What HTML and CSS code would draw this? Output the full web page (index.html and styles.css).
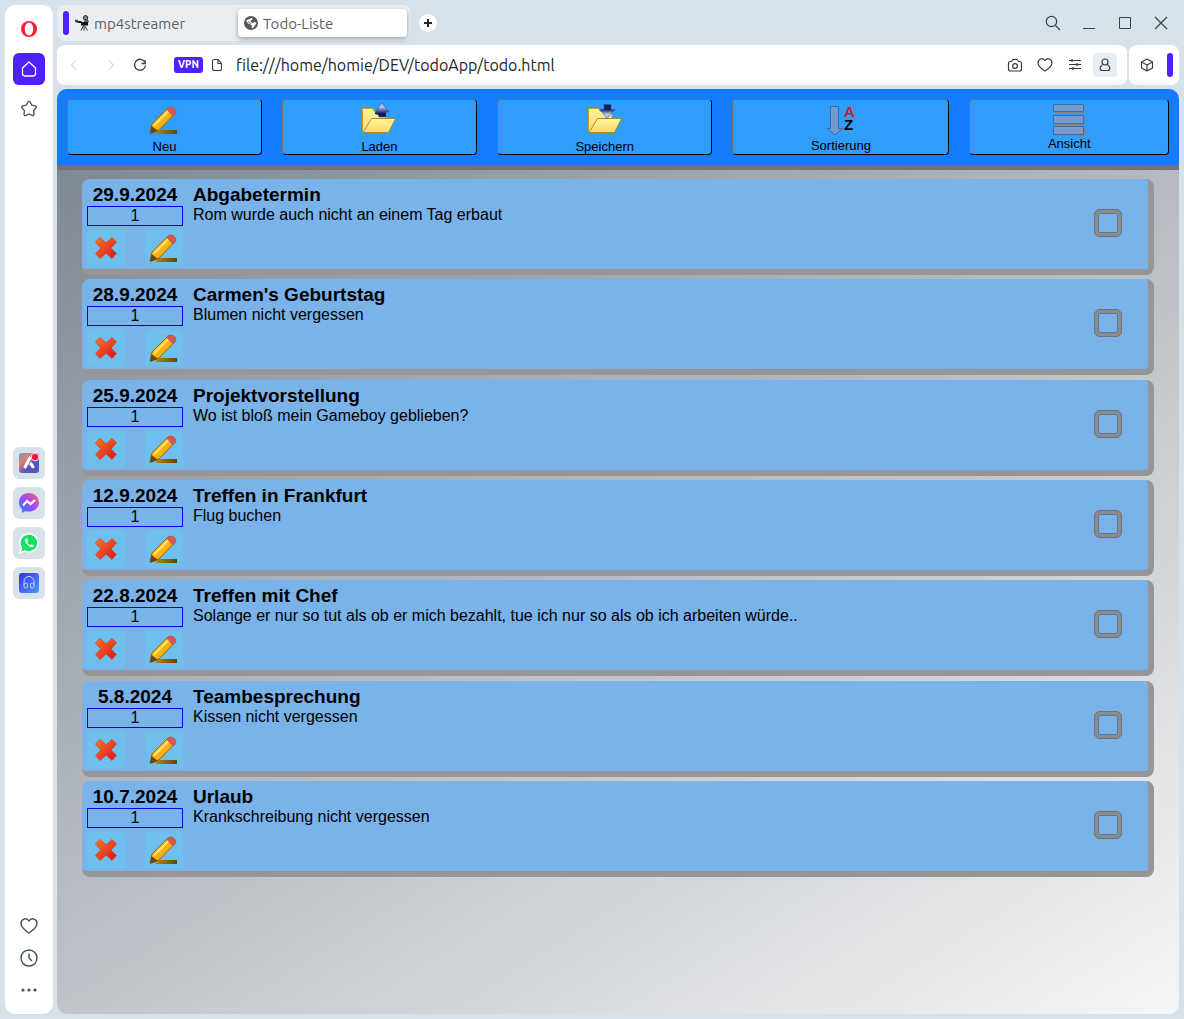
FILE: index.html
```html
<!DOCTYPE html>
<html lang="de">
<head>
<meta charset="utf-8">
<title>Todo-Liste</title>
<link rel="stylesheet" href="styles.css">
</head>
<body>
<svg class="defs" width="0" height="0" aria-hidden="true">
  <defs>
    <linearGradient id="wood" x1="0" y1="0" x2="1" y2="1"><stop offset="0" stop-color="#ffd52a"/><stop offset="1" stop-color="#f39200"/></linearGradient>
    <linearGradient id="line" x1="0" x2="1"><stop offset="0" stop-color="#b8860b"/><stop offset="1" stop-color="#5e4410"/></linearGradient>
    <linearGradient id="red" x1="0" y1="0" x2="1" y2="1"><stop offset="0" stop-color="#ff7a1c"/><stop offset="1" stop-color="#d3102b"/></linearGradient>
    <linearGradient id="paper" x1="0" y1="0" x2="0" y2="1"><stop offset="0" stop-color="#fff3a0"/><stop offset="1" stop-color="#f5dc68"/></linearGradient>
    <linearGradient id="up" x1="0" y1="0" x2="0" y2="1"><stop offset="0.3" stop-color="#a9bfec"/><stop offset="0.75" stop-color="#101c58"/></linearGradient>
    <linearGradient id="down" x1="0" y1="0" x2="0" y2="1"><stop offset="0.35" stop-color="#101c58"/><stop offset="0.7" stop-color="#b4c8f0"/></linearGradient>
    <linearGradient id="aria" x1="0" y1="0" x2="1" y2="1"><stop offset="0" stop-color="#4aa6d8"/><stop offset="0.3" stop-color="#e0826a"/><stop offset="0.6" stop-color="#5a55b8"/><stop offset="1" stop-color="#4a5cc8"/></linearGradient>
    <linearGradient id="chat" x1="1" y1="0" x2="0" y2="1"><stop offset="0" stop-color="#ff6a70"/><stop offset="0.5" stop-color="#a444f4"/><stop offset="1" stop-color="#1090ff"/></linearGradient>
    <linearGradient id="player" x1="0" y1="0" x2="1" y2="1"><stop offset="0" stop-color="#3f2bf0"/><stop offset="1" stop-color="#4a9af8"/></linearGradient>
    <symbol id="pencil" viewBox="0 0 38 38">
      <path d="M14 29h18v4H10z" fill="url(#line)"/>
      <path d="M5 32 7 23 22.500 7.500q4-2.500 6 0 3 2.500.5 6L14 29z" fill="url(#wood)" stroke="#9b650b"/>
      <path d="m9 24.500 15.500-15.500" stroke="#ffe36b" stroke-width="2"/>
      <path d="m21.500 8 2-1.500c5-2 9 3 6.500 6.500l-2 2z" fill="#d9534f" stroke="#a8605e" stroke-width=".8"/>
      <path d="m5 33 1.500-8L13 30z" fill="#6b4611"/>
    </symbol>
    <symbol id="cross" viewBox="0 0 38 38">
      <path d="m13 8.500 6 5.500 6-5.500 4.500 4.500-5.500 6 5.500 5.500-4.500 5-6-5.500-6 5.500-4.500-5 5.500-5.500-5.500-6z" fill="url(#red)" stroke="#e04a26" stroke-linejoin="round"/>
    </symbol>
    <symbol id="folder" viewBox="0 0 38 38">
      <path d="M2.500 31V7.500h10l2 3h11.500V18L9 31z" fill="url(#paper)" stroke="#c79a1a" stroke-linejoin="round"/>
      <path d="m3 31.500 8.500-14H35.500l-7 14z" fill="url(#paper)" stroke="#b08c2c" stroke-linejoin="round"/>
    </symbol>
  </defs>
</svg>
<div class="browser">
  <nav class="rail" aria-label="Seitenleiste">
    <div class="rail-group">
      <button class="rail-btn" aria-label="Opera"><svg width="18" height="18"><path fill-rule="evenodd" fill="#fa1e35" d="M9 1a8 8 0 1 0 0 16A8 8 0 0 0 9 1zM9 2.500c2.500 0 4.200 3 4.200 6.500S11.500 15.500 9 15.500 4.800 12.500 4.800 9 6.500 2.500 9 2.500z"/></svg></button>
      <button class="rail-btn home" aria-label="Startseite"><svg width="18" height="18" fill="none" stroke="#fff" stroke-width="1.300"><path d="M2.500 8 9 2l6.500 6v5.500q0 2.500-2.500 2.500H5q-2.500 0-2.500-2.500z" stroke-linejoin="round"/></svg></button>
      <button class="rail-btn" aria-label="Lesezeichen"><svg width="18" height="18" fill="none" stroke="#44505c" stroke-width="1.300"><path d="M7.800 2.200q1.200-1.600 2.400 0l1.600 2.900 3.400.7q1.900.6.7 2.200l-2.300 2.700.4 3.400q-.1 1.900-1.900 1.300L9 14l-3.100 1.400q-1.800.6-1.900-1.300l.4-3.400L2.100 8q-1.200-1.600.7-2.200l3.400-.7z" stroke-linejoin="round"/></svg></button>
    </div>
    <div class="rail-group apps">
      <button class="rail-btn app" aria-label="Aria"><svg width="22" height="22"><rect x="1" y="1" width="20" height="20" rx="3" fill="url(#aria)"/><path d="M12.500 5 6.500 16M12 11q2 1.500 3.500 5" stroke="#fff" stroke-width="3" fill="none"/><circle cx="17" cy="5" r="3.800" fill="#f5133c" stroke="#e4e8f0"/></svg></button>
      <button class="rail-btn app" aria-label="Messenger"><svg width="22" height="22"><path d="M11 1C5 1 1 5 1 10.500c0 3 1.200 5 3 6.500v4l3.500-2q1.500.5 3.500.5c6 0 10-4 10-9S17 1 11 1z" fill="url(#chat)"/><path d="m5 13.500 4-4.500 3.500 3 4.500-4" fill="none" stroke="#fff" stroke-width="2.200"/></svg></button>
      <button class="rail-btn app" aria-label="WhatsApp"><svg width="22" height="22"><path d="M2 20.500 3.500 16A9 9 0 1 1 7 19z" fill="#17df68" stroke="#fff" stroke-width="1.500"/><path d="M7.500 6.500Q6 8 7.500 10.500t5 4.500q2.500 1 3.500-1.200l-2.500-1.500-1.300 1q-2.200-1-3-3l1-1.200-1-2.600z" fill="#fff"/></svg></button>
      <button class="rail-btn app" aria-label="Player"><svg width="22" height="22"><rect x="1" y="1" width="20" height="20" rx="3" fill="url(#player)"/><path d="M6 13V9.500a5 5 0 0 1 10 0V13" fill="none" stroke="#c8dcff"/><rect x="6" y="11" width="3.500" height="5" rx="1.700" fill="none" stroke="#c8dcff"/><rect x="12.500" y="11" width="3.500" height="5" rx="1.700" fill="none" stroke="#c8dcff"/></svg></button>
    </div>
    <div class="rail-group bottom">
      <button class="rail-btn" aria-label="Favoriten"><svg width="18" height="18" fill="none" stroke="#44505c" stroke-width="1.400"><path d="M9 4C6.500 0 1 2 1 6.500c0 4 5 7.500 8 9.500 3-2 8-5.500 8-9.500C17 2 11.500 0 9 4z"/></svg></button>
      <button class="rail-btn" aria-label="Verlauf"><svg width="18" height="18" fill="none" stroke="#44505c" stroke-width="1.400"><circle cx="9" cy="9" r="8"/><path d="M9 4.500V9l3 3"/></svg></button>
      <button class="rail-btn" aria-label="Mehr"><svg width="18" height="18" fill="#44505c"><circle cx="3" cy="9" r="1.600"/><circle cx="9" cy="9" r="1.600"/><circle cx="15" cy="9" r="1.600"/></svg></button>
    </div>
  </nav>

  <div class="main">
    <div class="tabbar">
      <div class="tabs">
        <span class="island"></span>
        <button class="tab"><svg width="14" height="16" viewBox="0 0 14 16"><circle cx="10.500" cy="2.800" r="2.200" fill="#888" stroke="#222"/><circle cx="11.500" cy="6.500" r="1.700" fill="#777" stroke="#222"/><path d="M0 4.500 3 5v3L0 7z" fill="#444"/><path d="M3 6h3l1 1h6v3.500H6V8H3z" fill="#111"/><path d="M9 10v5.500M8.500 10.500 6 15.500M9.500 10.500l3 5" stroke="#333"/></svg>mp4streamer</button>
        <button class="tab active"><svg width="14" height="14" viewBox="0 0 14 14"><circle cx="7" cy="7" r="7" fill="#54585c"/><path d="M2 4.500 5.500 3l3-1.500L8 4 6 5l2 2 3-1 1.500 1L10 11l-2 1.500L7.500 9 4 7.500z" fill="#fff"/><path d="M4 5.500 7 8" stroke="#54585c"/></svg>Todo-Liste</button>
      </div>
      <button class="newtab" aria-label="Neuer Tab"><svg width="10" height="10"><path d="M5 1v8M1 5h8" stroke="#1c2733" stroke-width="2"/></svg></button>
      <div class="window-controls">
        <button class="plain" aria-label="Suchen"><svg width="16" height="16" fill="none" stroke="#3a4046" stroke-width="1.200"><circle cx="6.500" cy="6.500" r="5.200"/><path d="m10.500 10.500 4.500 4.500"/></svg></button>
        <button class="plain" aria-label="Minimieren"><svg width="16" height="16"><path d="M2 13.500h12" stroke="#3a4046"/></svg></button>
        <button class="plain" aria-label="Maximieren"><svg width="16" height="16"><path d="M2.500 2.500h11v11h-11z" fill="none" stroke="#3a4046"/></svg></button>
        <button class="plain" aria-label="Schließen"><svg width="16" height="16"><path d="m2 2 12 12M14 2 2 14" stroke="#3a4046" stroke-width="1.200"/></svg></button>
      </div>
    </div>

    <div class="addressrow">
      <div class="address">
        <button class="plain back" aria-label="Zurück"><svg width="16" height="16"><path d="M10 3.500 5.500 8l4.500 4.500" fill="none" stroke="#c3c8cc"/></svg></button>
        <button class="plain forward" aria-label="Vor"><svg width="16" height="16"><path d="M6 3.500 10.500 8 6 12.500" fill="none" stroke="#c3c8cc"/></svg></button>
        <button class="plain reload" aria-label="Neu laden"><svg width="16" height="16"><path d="M12.800 5A5.500 5.500 0 1 0 13.500 8.500M13.200 3v3.500H9.500" fill="none" stroke="#333d47" stroke-width="1.300"/></svg></button>
        <button class="vpn">VPN</button>
        <svg class="page-icon" width="12" height="14"><path d="M3.500 1.500h3.500l3.500 4v5q0 2-2 2h-5q-2 0-2-2v-7q0-2 2-2zM7 1.500v4h3.500" fill="none" stroke="#333d47" stroke-width="1.100"/></svg>
        <input class="url" type="text" aria-label="Adresse" value="file:///home/homie/DEV/todoApp/todo.html">
        <div class="actions">
          <button class="action" aria-label="Schnappschuss"><svg width="16" height="16" fill="none" stroke="#333d47" stroke-width="1.200"><path d="M3.500 4.500h1L6 2.500h4l1.500 2h1q2 0 2 2V12q0 2-2 2h-9q-2 0-2-2V6.500q0-2 2-2z"/><circle cx="8" cy="9" r="2.400"/></svg></button>
          <button class="action" aria-label="Favorit"><svg width="16" height="16" fill="none" stroke="#333d47" stroke-width="1.200"><path d="M8 3.500C5.500 0 1 2 1 6c0 3.500 4.500 6.500 7 8 2.500-1.500 7-4.500 7-8 0-4-4.500-6-7-2.500z"/></svg></button>
          <button class="action" aria-label="Einstellungen"><svg width="16" height="16" stroke="#333d47" stroke-width="1.200"><path d="M2 3.500h12M2 7.500h12M2 11.500h12M5 2v3M10 6v3M6 10v3"/></svg></button>
          <button class="action profile" aria-label="Profil"><svg width="16" height="16" fill="none" stroke="#333d47" stroke-width="1.200"><circle cx="8" cy="5" r="3"/><path d="M5.500 7.500 3.500 10q-1 3.500 2 3.500h5q3 0 2-3.500l-2-2.500"/></svg></button>
        </div>
      </div>
      <div class="extensions">
        <button class="plain" aria-label="Erweiterungen"><svg width="16" height="16" fill="none" stroke="#333d47" stroke-width="1.200"><path d="M8 2 13.500 5v6L8 14 2.500 11V5zM2.500 5 8 8l5.500-3M8 8v6" stroke-linejoin="round"/></svg></button>
        <span class="island"></span>
      </div>
    </div>

    <main class="page">
      <header class="toolbar">
        <button class="tool"><svg width="38" height="38"><use href="#pencil"/></svg>Neu</button>
        <button class="tool"><svg width="38" height="38"><use href="#folder"/><path d="m22 2 7 9h-3v5h-7q0-3-4-3 0-4 4-5h-2z" fill="url(#up)" stroke="#3553a0" stroke-width=".6"/></svg>Laden</button>
        <button class="tool"><svg width="38" height="38"><use href="#folder"/><path d="M18 3.500h7v5h4l-8 9-7-9h4z" fill="url(#down)" stroke="#3553a0" stroke-width=".6"/></svg>Speichern</button>
        <button class="tool"><svg width="36" height="36"><path d="M7.500 4.500h8v22h4L12 33l-7.500-6.500h3z" fill="#6f9bd1" stroke="#3f68ab"/><text><tspan x="21" y="15" fill="#dc1420">A</tspan><tspan x="21" y="28" fill="#000">Z</tspan></text></svg>Sortierung</button>
        <button class="tool"><svg width="34" height="33" class="bars"><path d="M3 3h30v7H3zM3 14h30v8H3zM3 25h30v8H3z" fill="#7f8286"/><path d="M1.500 1.500h30v7h-30zM1.500 12.500h30v8h-30zM1.500 23.500h30v8h-30z" fill="#739dd2" stroke="#4169a8"/></svg>Ansicht</button>
      </header>
      <ul class="todos">
        <li class="todo">
          <div class="side"><time class="date">29.9.2024</time><div class="count">1</div><div class="btns"><button class="mini" aria-label="Löschen"><svg width="38" height="38"><use href="#cross"/></svg></button><button class="mini" aria-label="Bearbeiten"><svg width="38" height="38"><use href="#pencil"/></svg></button></div></div>
          <div class="text"><h2>Abgabetermin</h2><p>Rom wurde auch nicht an einem Tag erbaut</p></div>
          <input type="checkbox" class="done" aria-label="Abgabetermin erledigt">
        </li>
        <li class="todo">
          <div class="side"><time class="date">28.9.2024</time><div class="count">1</div><div class="btns"><button class="mini" aria-label="Löschen"><svg width="38" height="38"><use href="#cross"/></svg></button><button class="mini" aria-label="Bearbeiten"><svg width="38" height="38"><use href="#pencil"/></svg></button></div></div>
          <div class="text"><h2>Carmen's Geburtstag</h2><p>Blumen nicht vergessen</p></div>
          <input type="checkbox" class="done" aria-label="Carmen's Geburtstag erledigt">
        </li>
        <li class="todo">
          <div class="side"><time class="date">25.9.2024</time><div class="count">1</div><div class="btns"><button class="mini" aria-label="Löschen"><svg width="38" height="38"><use href="#cross"/></svg></button><button class="mini" aria-label="Bearbeiten"><svg width="38" height="38"><use href="#pencil"/></svg></button></div></div>
          <div class="text"><h2>Projektvorstellung</h2><p>Wo ist bloß mein Gameboy geblieben?</p></div>
          <input type="checkbox" class="done" aria-label="Projektvorstellung erledigt">
        </li>
        <li class="todo">
          <div class="side"><time class="date">12.9.2024</time><div class="count">1</div><div class="btns"><button class="mini" aria-label="Löschen"><svg width="38" height="38"><use href="#cross"/></svg></button><button class="mini" aria-label="Bearbeiten"><svg width="38" height="38"><use href="#pencil"/></svg></button></div></div>
          <div class="text"><h2>Treffen in Frankfurt</h2><p>Flug buchen</p></div>
          <input type="checkbox" class="done" aria-label="Treffen in Frankfurt erledigt">
        </li>
        <li class="todo">
          <div class="side"><time class="date">22.8.2024</time><div class="count">1</div><div class="btns"><button class="mini" aria-label="Löschen"><svg width="38" height="38"><use href="#cross"/></svg></button><button class="mini" aria-label="Bearbeiten"><svg width="38" height="38"><use href="#pencil"/></svg></button></div></div>
          <div class="text"><h2>Treffen mit Chef</h2><p>Solange er nur so tut als ob er mich bezahlt, tue ich nur so als ob ich arbeiten würde..</p></div>
          <input type="checkbox" class="done" aria-label="Treffen mit Chef erledigt">
        </li>
        <li class="todo">
          <div class="side"><time class="date">5.8.2024</time><div class="count">1</div><div class="btns"><button class="mini" aria-label="Löschen"><svg width="38" height="38"><use href="#cross"/></svg></button><button class="mini" aria-label="Bearbeiten"><svg width="38" height="38"><use href="#pencil"/></svg></button></div></div>
          <div class="text"><h2>Teambesprechung</h2><p>Kissen nicht vergessen</p></div>
          <input type="checkbox" class="done" aria-label="Teambesprechung erledigt">
        </li>
        <li class="todo">
          <div class="side"><time class="date">10.7.2024</time><div class="count">1</div><div class="btns"><button class="mini" aria-label="Löschen"><svg width="38" height="38"><use href="#cross"/></svg></button><button class="mini" aria-label="Bearbeiten"><svg width="38" height="38"><use href="#pencil"/></svg></button></div></div>
          <div class="text"><h2>Urlaub</h2><p>Krankschreibung nicht vergessen</p></div>
          <input type="checkbox" class="done" aria-label="Urlaub erledigt">
        </li>
      </ul>
    </main>
  </div>
</div>
</body>
</html>
```
FILE: styles.css
```css
* { box-sizing: border-box; }

body {
  margin: 0;
  background: #d7e1e9;
  font-family: "Liberation Sans", Arial, sans-serif;
  color: #000;
}

.defs { position: absolute; }

button {
  font: inherit;
  color: inherit;
  margin: 0;
  padding: 0;
  border: 0;
  background: none;
}

svg { display: block; flex: none; }

.browser {
  display: flex;
  gap: 4px;
  min-height: 100vh;
  padding: 5px;
}

/* side rail */
.rail {
  display: flex;
  flex-direction: column;
  justify-content: space-between;
  width: 48px;
  padding: 8px 0;
  border-radius: 10px;
  background: #fff;
}

.rail-group {
  display: flex;
  flex-direction: column;
  align-items: center;
  gap: 8px;
}

.apps { margin-top: 10px; }
.bottom { gap: 0; }

.rail-btn {
  display: grid;
  place-items: center;
  width: 32px;
  height: 32px;
  border-radius: 6px;
}

.home { background: #4f21ff; }
.app { background: #d7e1e8; }

/* tabs */
.main {
  display: flex;
  flex-direction: column;
  flex: 1;
  min-width: 0;
}

.tabbar {
  display: flex;
  align-items: center;
  height: 36px;
  margin-bottom: 4px;
  font-family: "Ubuntu", "Noto Sans", sans-serif;
  font-size: 15px;
  color: #5b6066;
}

.tabs {
  display: flex;
  align-items: center;
  height: 36px;
  padding: 0 4px 0 6px;
  border-radius: 8px;
  background: #e9eef2;
}

.island {
  width: 6px;
  height: 24px;
  border-radius: 3px;
  background: #4f21ff;
}

.tab {
  display: flex;
  align-items: center;
  gap: 5px;
  width: 169px;
  height: 28px;
  padding: 0 6px;
  border-radius: 4px;
}

.active {
  background: #fff;
  box-shadow: 0 2px 5px #0005;
}

.newtab {
  display: grid;
  place-items: center;
  width: 18px;
  height: 18px;
  margin-left: 8px;
  border-radius: 9px;
  background: #fff;
}

.window-controls {
  display: flex;
  gap: 20px;
  margin-left: auto;
  padding-right: 10px;
}

/* address bar */
.addressrow {
  display: flex;
  gap: 2px;
  margin-bottom: 4px;
}

.address,
.extensions {
  display: flex;
  align-items: center;
  height: 40px;
  border-radius: 8px;
  background: #fff;
}

.address { flex: 1; padding: 0 10px 0 9px; }
.extensions { gap: 12px; padding: 0 6px 0 10px; }
.forward { margin-left: 21px; }
.reload { margin-left: 13px; }

.vpn {
  width: 29px;
  height: 16px;
  margin-left: 26px;
  border-radius: 3px;
  background: #4f21ff;
  color: #fff;
  font: bold 10px/16px "Ubuntu", "Noto Sans", sans-serif;
}

.page-icon { margin: 0 13px 0 8px; }

.url {
  flex: 1;
  min-width: 0;
  padding: 0;
  border: 0;
  background: none;
  color: #20262c;
  font: 16px/24px "Ubuntu", "Noto Sans", sans-serif;
}

.actions { display: flex; gap: 6px; }

.action {
  display: grid;
  place-items: center;
  width: 24px;
  height: 24px;
  border-radius: 4px;
}

.profile { background: #e8edf1; }

/* todo page */
.page {
  flex: 1;
  border-radius: 10px;
  overflow: hidden;
  background: linear-gradient(148deg, #79838f, #f6f6f6);
}

.toolbar {
  display: flex;
  gap: 20px;
  padding: 10px;
  border-bottom: 5px solid #6f7478;
  background: #157bff;
}

.tool {
  display: flex;
  flex: 1 1 auto;
  flex-direction: column;
  align-items: center;
  justify-content: center;
  height: 56px;
  border: 1px solid;
  border-color: #6e7276 #000 #000 #6e7276;
  border-radius: 4px;
  background: #309dfa;
  font-size: 13px;
  line-height: 15px;
}

.tool text { font: bold 15px "Liberation Sans", Arial, sans-serif; }

.todos {
  display: grid;
  align-content: space-between;
  min-height: 698px;
  margin: 9px 25px 0;
  padding: 0;
  list-style: none;
}

.todo {
  display: flex;
  gap: 10px;
  padding: 5px 26px 2px 5px;
  border: solid #969698;
  border-width: 0 6px 6px 0;
  border-radius: 8px;
  background: #7ab2ea;
}

.side { width: 96px; }

.date {
  display: block;
  font-size: 19px;
  line-height: 22px;
  font-weight: bold;
  text-align: center;
}

.count {
  height: 20px;
  border: 1px solid #0000ee;
  font-size: 16px;
  line-height: 18px;
  text-align: center;
}

.btns {
  display: flex;
  justify-content: space-between;
  margin-top: 3px;
}

.mini {
  border-radius: 4px;
  background: #6fbfee;
}

.text { flex: 1; }

.text h2 {
  margin: 0;
  font-size: 19px;
  line-height: 22px;
}

.text p {
  margin: 0;
  font-size: 16px;
  line-height: 18px;
}

.done {
  appearance: none;
  align-self: center;
  width: 28px;
  height: 28px;
  margin: 0 0 5px;
  border: 4px solid #8b8c8e;
  border-radius: 6px;
  outline: 1px solid #6a7480;
  outline-offset: -1px;
  box-shadow: inset 0 0 0 1px #5f7590;
}
```
